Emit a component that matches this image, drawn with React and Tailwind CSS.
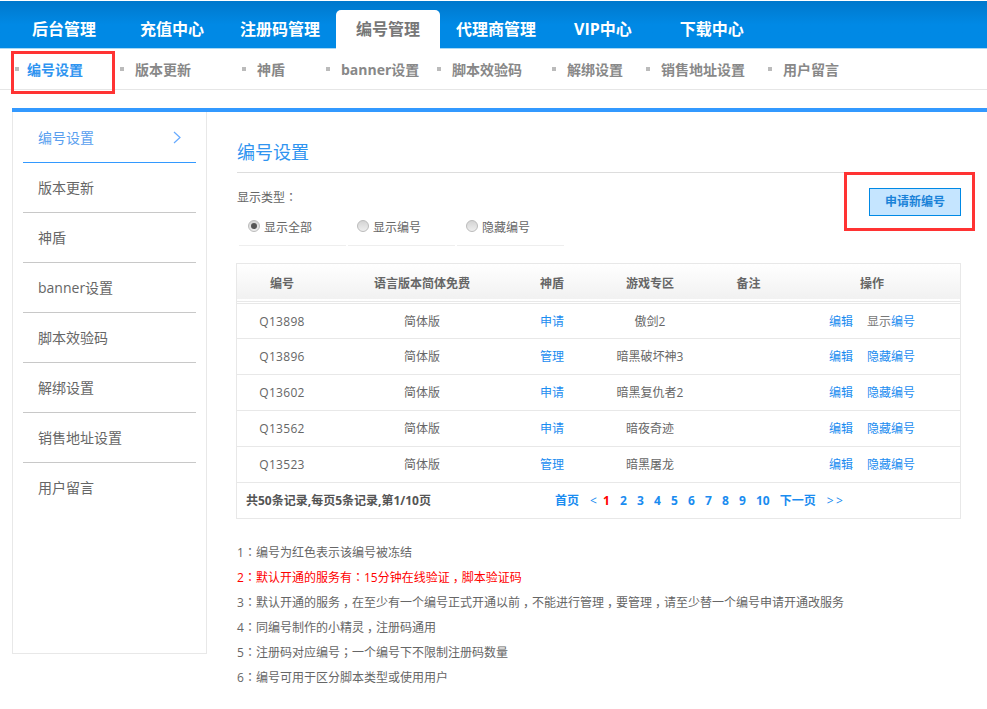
const tabs = [
  { t: "后台管理", c: "ml-3" },
  { t: "充值中心", c: "ml-1" },
  { t: "注册码管理", c: "-ml-1" },
  { t: "编号管理", c: "-ml-1", active: true },
  { t: "代理商管理", c: "-ml-1" },
  { t: "VIP中心", c: "-ml-0.5" },
  { t: "下载中心", c: "ml-[8px]" },
];
const subs = [
  { t: "编号设置", w: "w-[56px]", ml: "ml-[15px]", gap: "ml-[8px]", active: true },
  { t: "版本更新", w: "w-[56px]", ml: "ml-[37px]", gap: "ml-[11px]" },
  { t: "神盾", w: "w-[28px]", ml: "ml-[51px]", gap: "ml-[11px]" },
  { t: "banner设置", w: "w-[77px]", ml: "ml-[41px]", gap: "ml-[11px]" },
  { t: "脚本效验码", w: "w-[70px]", ml: "ml-[19px]", gap: "ml-[11px]" },
  { t: "解绑设置", w: "w-[56px]", ml: "ml-[30px]", gap: "ml-[11px]" },
  { t: "销售地址设置", w: "w-[84px]", ml: "ml-[23px]", gap: "ml-[11px]" },
  { t: "用户留言", w: "w-[56px]", ml: "ml-[23px]", gap: "ml-[11px]" },
];
const side = ["编号设置", "版本更新", "神盾", "banner设置", "脚本效验码", "解绑设置", "销售地址设置", "用户留言"];
const rows = [
  ["Q13898", "申请", "傲剑2", "显示编号", true],
  ["Q13896", "管理", "暗黑破坏神3", "隐藏编号"],
  ["Q13602", "申请", "暗黑复仇者2", "隐藏编号"],
  ["Q13562", "申请", "暗夜奇迹", "隐藏编号"],
  ["Q13523", "管理", "暗黑屠龙", "隐藏编号"],
];
const notes = [
  ["1：编号为红色表示该编号被冻结"],
  ["2：默认开通的服务有：15分钟在线验证，脚本验证码", true],
  ["3：默认开通的服务，在至少有一个编号正式开通以前，不能进行管理，要管理，请至少替一个编号申请开通改服务"],
  ["4：同编号制作的小精灵，注册码通用"],
  ["5：注册码对应编号；一个编号下不限制注册码数量"],
  ["6：编号可用于区分脚本类型或使用用户"],
];

function Punct({ text }) {
  return text.split(/([：；，])/).map((p, i) => {
    if (p === "：" || p === "；") return <span key={i} className="font-['Noto_Sans_CJK_TC',sans-serif]">{p}</span>;
    if (p === "，") return <span key={i} className="ml-[3px] tracking-[-3px]">{p}</span>;
    return <span key={i}>{p}</span>;
  });
}

function Radio({ label, checked }) {
  return (
    <div className="w-[107px] h-[30px] border-b border-[#eeeeee] flex pl-[9px] mr-[2px]">
      <span className="w-[12px] h-[12px] mt-[4px] rounded-full border border-[#bbbbbb] bg-gradient-to-b from-[#d4d4d4] to-[#eeeeee] flex items-center justify-center">
        {checked && <span className="w-[6px] h-[6px] rounded-full bg-[#555555]" />}
      </span>
      <span className="ml-[4px] mt-[3px] leading-[17px]">{label}</span>
    </div>
  );
}

export default function App() {
  return (
    <div className="relative w-[987px] h-[709px] bg-white text-[12px] text-[#666666] overflow-hidden font-['Open_Sans','Noto_Sans_CJK_SC',sans-serif]">
      <div className="h-[48px] mt-[1px] flex items-end bg-gradient-to-b from-[#0078cc] via-[#0089e5] to-[#0089e5] border-b border-[#a8d8f5]">
        {tabs.map((t) =>
          t.active ? (
            <div key={t.t} className={`${t.c} h-[39px] -mb-[1px] px-5 rounded-t-[5px] bg-white text-[#777777] text-[16px] font-bold leading-[39px]`}>{t.t}</div>
          ) : (
            <div key={t.t} className={`${t.c} h-[39px] -mb-[1px] px-5 text-white text-[16px] font-bold leading-[39px]`}>{t.t}</div>
          )
        )}
      </div>
      <div className="h-[41px] border-b border-[#e6e6e6] flex items-center">
        {subs.map((s) => (
          <div key={s.t} className="flex items-center">
            <span className={`${s.ml} w-[4px] h-[4px] bg-[#bbbbbb]`} />
            <span className={`${s.gap} ${s.w} whitespace-nowrap text-[14px] font-bold ${s.active ? "text-[#2f94f0]" : "text-[#888888]"}`}>{s.t}</span>
          </div>
        ))}
      </div>
      <div className="ml-3 mt-[18px] h-[4px] bg-[#3399ff]" />
      <div className="flex">
        <div className="ml-3 w-[195px] h-[542px] border border-t-0 border-[#e8e8e8] px-[10px] pt-[1px]">
          {side.map((s, i) => (
            <div key={s} className={`h-[50px] px-[15px] flex items-center justify-between text-[14px] border-b ${i === 0 ? "border-b-[#3399ff] text-[#5a9fef]" : i === 7 ? "border-b-transparent" : "border-b-[#c8c8c8]"}`}>
              <span>{s}</span>
              {i === 0 && (
                <svg width="8" height="13" viewBox="0 0 8 13" fill="none" stroke="#66aaff" strokeWidth="1.2"><path d="M1 1l6 5.5L1 12" /></svg>
              )}
            </div>
          ))}
        </div>
        <div className="ml-[29px] w-[725px]">
          <div className="h-[61px] border-b border-[#dddddd] ml-[1px] text-[18px] text-[#2f94f0] leading-[25px] pt-[28px]">编号设置</div>
          <div className="relative pl-[1px]">
            <div className="h-[33px] pt-[15px] leading-[17px]"><Punct text="显示类型：" /></div>
            <div className="flex mt-[10px] ml-[2px]">
              <Radio label="显示全部" checked />
              <Radio label="显示编号" />
              <Radio label="隐藏编号" />
            </div>
            <div className="absolute left-[633px] top-[15px] w-[92px] h-[28px] border border-[#0089e5] bg-[#c5e5ff] text-[#1a82d8] font-bold text-center leading-[26px]">申请新编号</div>
          </div>
          <div className="mt-[17px] border border-[#e8e8e8]">
            <table className="w-full table-fixed border-collapse text-center">
              <colgroup>
                <col className="w-[90px]" />
                <col className="w-[190px]" />
                <col className="w-[70px]" />
                <col className="w-[126px]" />
                <col className="w-[71px]" />
                <col />
              </colgroup>
              <thead>
                <tr className="h-[38px] bg-gradient-to-b from-white to-[#f1f1f1] border-b-[3px] border-double border-b-[#e8e8e8] font-bold">
                  <th className="pt-[3px]">编号</th>
                  <th className="pt-[3px]">语言版本简体免费</th>
                  <th className="pt-[3px]">神盾</th>
                  <th className="pt-[3px]">游戏专区</th>
                  <th className="pt-[3px]">备注</th>
                  <th className="pt-[3px]">操作</th>
                </tr>
              </thead>
              <tbody>
                {rows.map((r) => (
                  <tr key={r[0]} className="h-[36px] border-b border-b-[#e8e8e8]">
                    <td className="pt-[2px] tracking-[0.3px]">{r[0]}</td>
                    <td className="pt-[2px]">简体版</td>
                    <td className="pt-[2px] text-[#1a8cf0]">{r[1]}</td>
                    <td className="pt-[2px]">{r[2]}</td>
                    <td className="pt-[2px]"></td>
                    <td className="pt-[2px]">
                      <span className="text-[#1a8cf0]">编辑</span>
                      <span className={`ml-[14px] ${r[4] ? "text-[#777777]" : "text-[#1a8cf0]"}`}>
                        {r[4] ? (<>显示<span className="text-[#1a8cf0]">编号</span></>) : r[3]}
                      </span>
                    </td>
                  </tr>
                ))}
              </tbody>
            </table>
            <div className="h-[35px] pt-[2px] flex items-center font-bold pl-[9px]">
              <span className="w-[309px] text-[#555555]">共50条记录,每页5条记录,第1/10页</span>
              <div className="flex items-center text-[#1a8cf0]">
                <span>首页</span>
                <span className="ml-[11px] font-normal">&lt;</span>
                <span className="ml-[6px] min-w-[7px] text-[#ff0000]">1</span>
                {["2", "3", "4", "5", "6", "7", "8", "9", "10"].map((n) => (
                  <span key={n} className="ml-[10px] min-w-[7px]">{n}</span>
                ))}
                <span className="ml-[10px]">下一页</span>
                <span className="ml-[11px] font-normal tracking-[2.5px]">&gt;&gt;</span>
              </div>
            </div>
          </div>
          <div className="mt-[20px] ml-[1px]">
            {notes.map((n) => (
              <div key={n[0]} className={`h-[25px] leading-[25px] whitespace-nowrap ${n[1] ? "text-[#ff0000]" : ""}`}><Punct text={n[0]} /></div>
            ))}
          </div>
        </div>
      </div>
      <div className="absolute left-[11px] top-[51px] w-[104px] h-[43px] border-[3px] border-[#ff3333]" />
      <div className="absolute left-[844px] top-[172px] w-[131px] h-[59px] border-[3px] border-[#ff3333]" />
    </div>
  );
}
